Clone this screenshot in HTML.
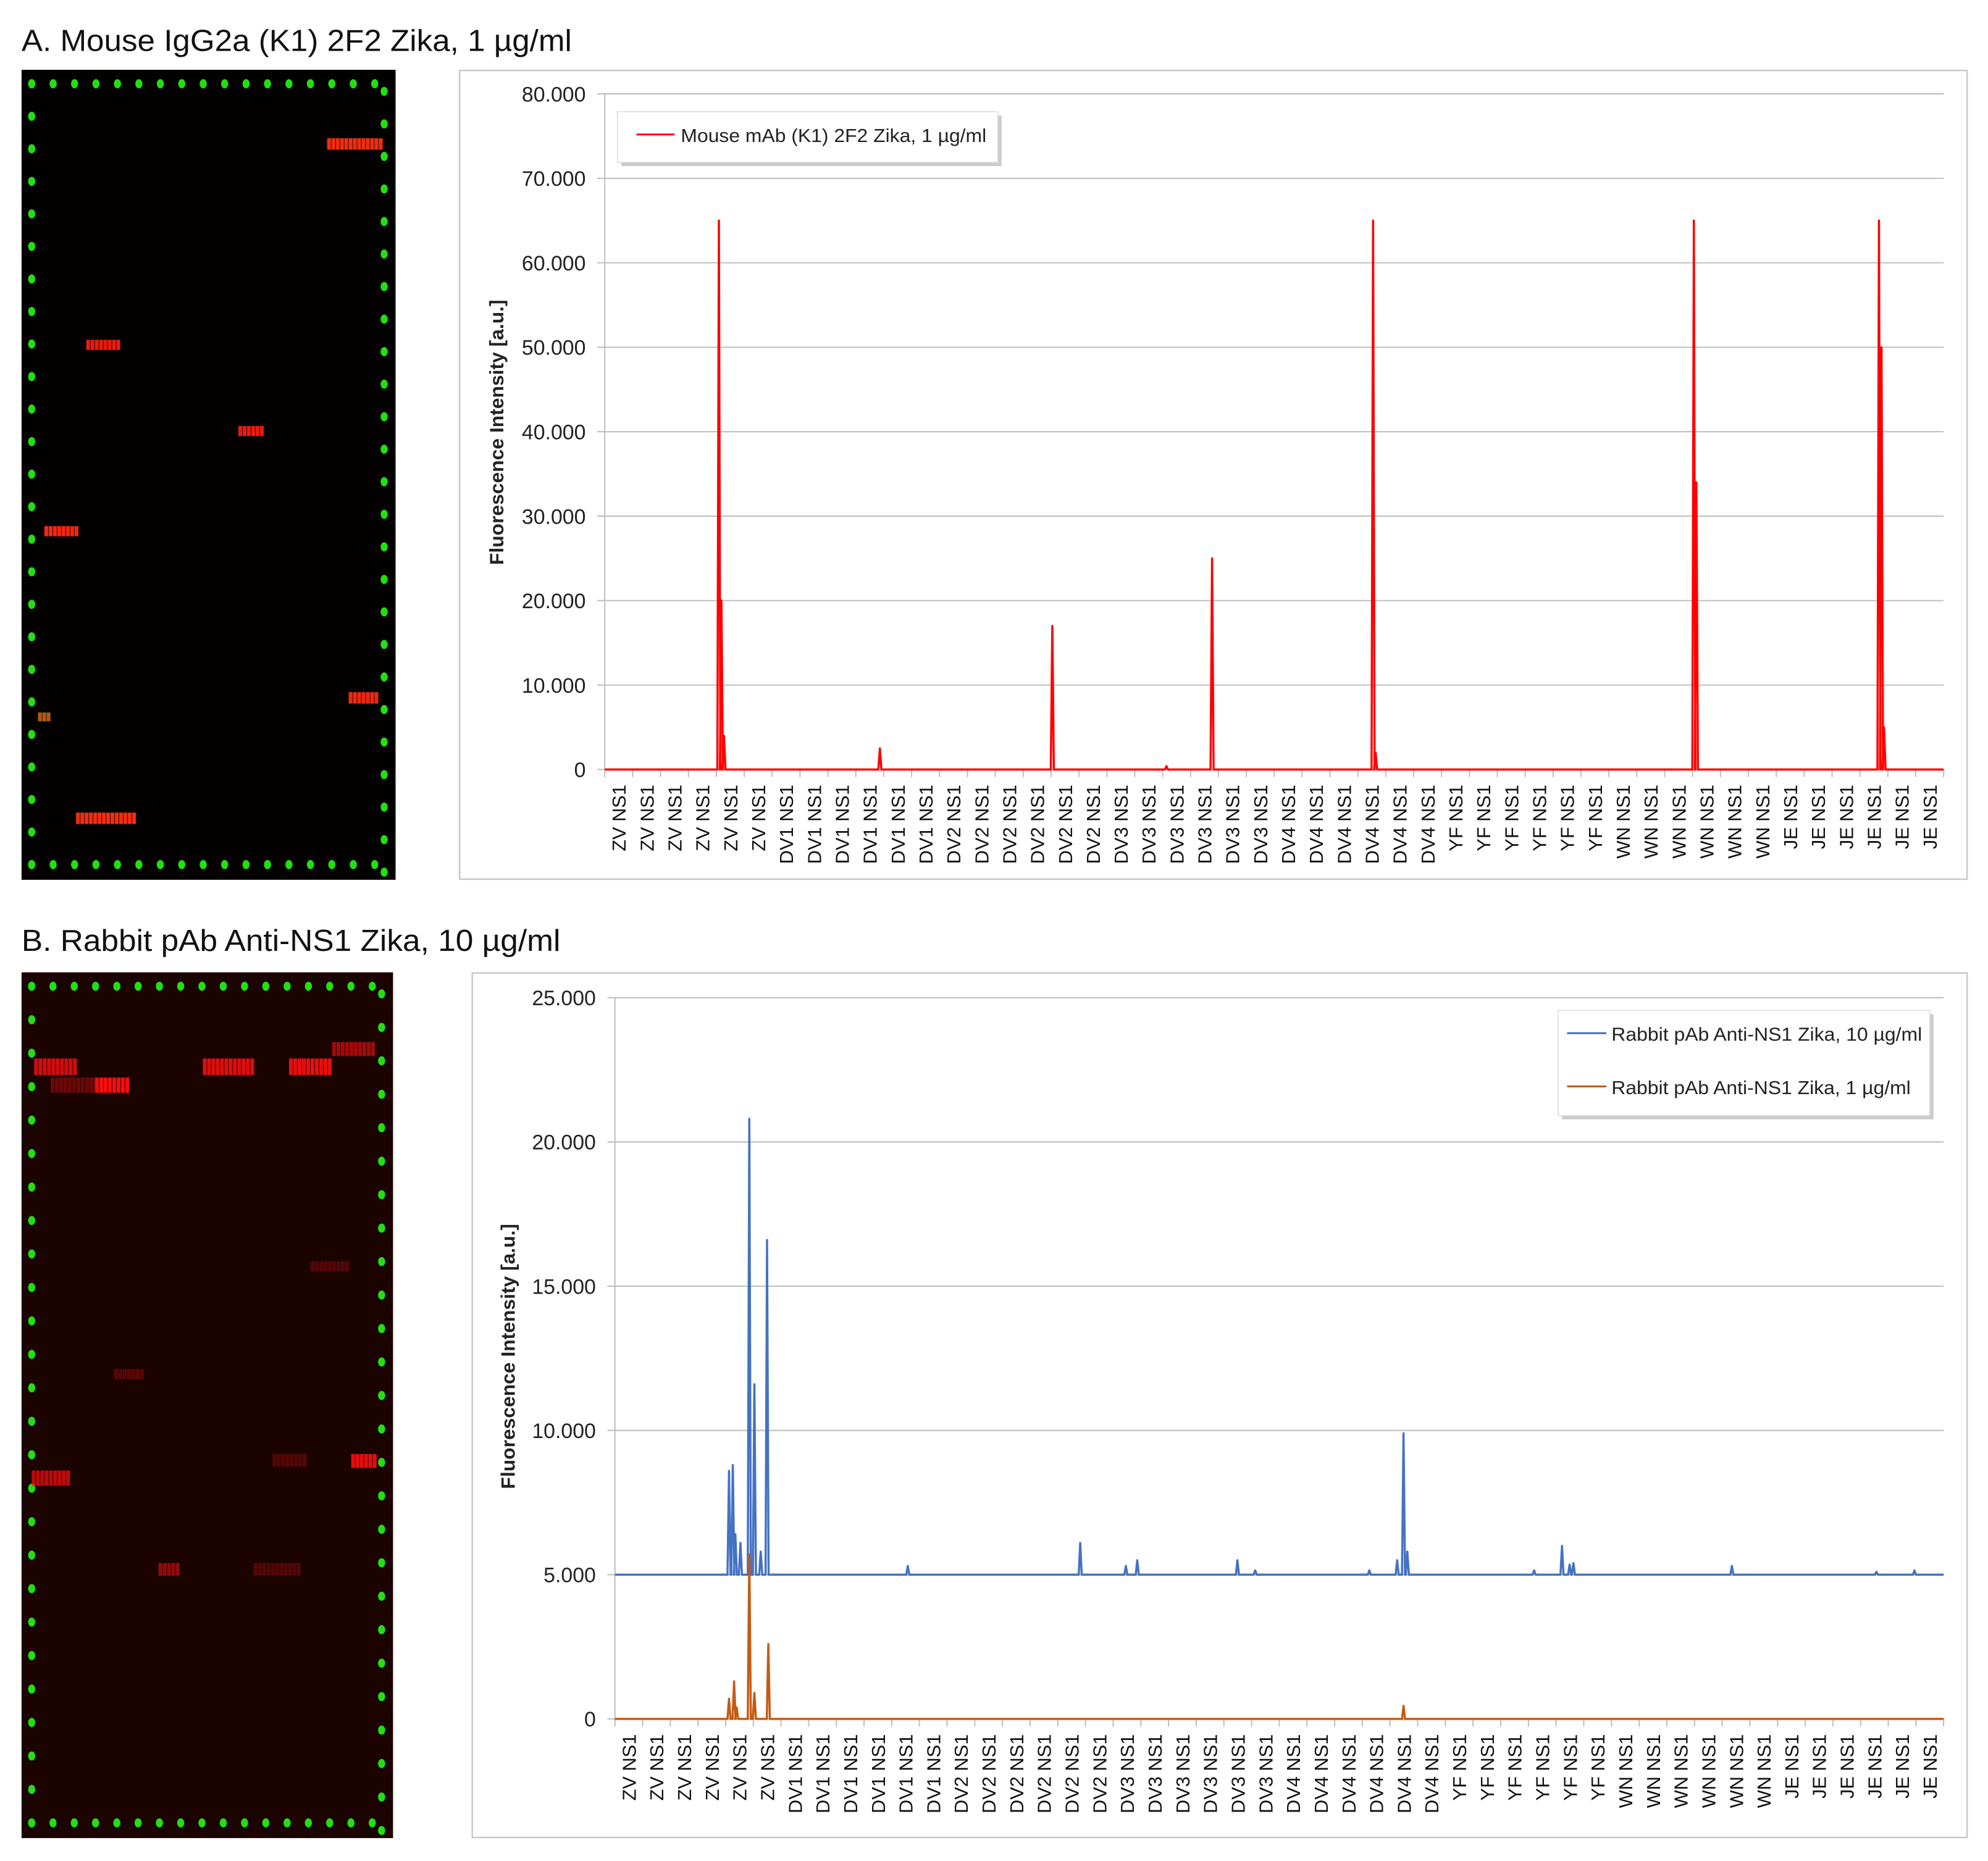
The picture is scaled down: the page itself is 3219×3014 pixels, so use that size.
<!DOCTYPE html>
<html><head><meta charset="utf-8"><style>
html,body{margin:0;padding:0;background:#fff;width:3219px;height:3014px;overflow:hidden}
svg{display:block}
text{font-family:"Liberation Sans",sans-serif}
</style></head><body>
<svg id="s" width="3219" height="3014" viewBox="0 0 1568 1468" xmlns="http://www.w3.org/2000/svg">
<rect width="1568" height="1468" fill="#fff"/>
<text x="17" y="40" font-size="24" fill="#111" textLength="434" lengthAdjust="spacingAndGlyphs">A. Mouse IgG2a (K1) 2F2 Zika, 1 µg/ml</text>
<text x="17" y="750" font-size="24" fill="#111" textLength="425" lengthAdjust="spacingAndGlyphs">B. Rabbit pAb Anti-NS1 Zika, 10 µg/ml</text>
<rect x="17" y="55" width="295" height="639" fill="#030100"/>
<rect x="17" y="767" width="293" height="683" fill="#1b0300"/>
<g id="spots"></g>
<rect x="362.5" y="55.5" width="1189" height="638" fill="#fff" stroke="#c8c8c8" stroke-width="1.2"/>
<rect x="372.5" y="767.5" width="1179" height="682" fill="#fff" stroke="#c8c8c8" stroke-width="1.2"/>
<g id="chartA"></g>
<g id="chartB"></g>
<rect x="490" y="91" width="300" height="40" fill="#999" opacity="0.5"/>
<rect x="487" y="88" width="300" height="40" fill="#fff" stroke="#ddd" stroke-width="0.8"/>
<line x1="502" y1="106" x2="532" y2="106" stroke="#f00" stroke-width="1.5"/>
<text x="537" y="112" font-size="15" fill="#222" textLength="241" lengthAdjust="spacingAndGlyphs">Mouse mAb (K1) 2F2 Zika, 1 µg/ml</text>
<rect x="1232" y="800" width="293" height="83" fill="#999" opacity="0.5"/>
<rect x="1229" y="797" width="293" height="83" fill="#fff" stroke="#ddd" stroke-width="0.8"/>
<line x1="1236" y1="815" x2="1267" y2="815" stroke="#4472c4" stroke-width="1.5"/>
<text x="1271" y="821" font-size="15" fill="#222" textLength="245" lengthAdjust="spacingAndGlyphs">Rabbit pAb Anti-NS1 Zika, 10 µg/ml</text>
<line x1="1236" y1="857" x2="1267" y2="857" stroke="#c55a11" stroke-width="1.5"/>
<text x="1271" y="863" font-size="15" fill="#222" textLength="236" lengthAdjust="spacingAndGlyphs">Rabbit pAb Anti-NS1 Zika, 1 µg/ml</text>
</svg>
<script>
var NS="http://www.w3.org/2000/svg";
function el(p,t,a,txt){var e=document.createElementNS(NS,t);for(var k in a)e.setAttribute(k,a[k]);if(txt!=null)e.textContent=txt;p.appendChild(e);return e;}
var sp=document.getElementById('spots');
function dots(x0,x1,y0,y1){
 for(var i=0;i<17;i++){el(sp,'ellipse',{cx:x0+8+i*(x1-x0-16)/16.5,cy:y0+11,rx:2.8,ry:3.6,fill:'#22e010'});}
 for(var i=0;i<17;i++){el(sp,'ellipse',{cx:x0+8+i*(x1-x0-16)/16.5,cy:y1-12,rx:2.8,ry:3.6,fill:'#22e010'});}
 var n=Math.round((y1-y0-24)/26);
 for(var j=0;j<=n;j++){var yy=y0+11+j*(y1-y0-23)/n;
  el(sp,'ellipse',{cx:x0+8,cy:yy,rx:2.8,ry:3.6,fill:'#22e010'});
  el(sp,'ellipse',{cx:x1-9,cy:yy+6,rx:2.8,ry:3.6,fill:'#22e010'});}
}
dots(17,312,55,694);dots(17,310,767,1450);
function blk(x,y,w,h,c,o){
 for(var xx=x;xx<x+w;xx+=3.4){el(sp,'rect',{x:xx,y:y,width:3,height:h/2,fill:c,opacity:o});el(sp,'rect',{x:xx,y:y+h/2,width:3,height:h/2,fill:c,opacity:o});}
}
blk(258,109,42,9,'#ff3010',0.95);blk(68,268,27,8,'#ff2010',0.9);blk(188,336,20,8,'#ff2010',0.9);
blk(35,415,27,8,'#ff2a10',0.95);blk(275,546,21,9,'#ff2a10',0.95);blk(30,562,10,7,'#ff8020',0.7);blk(60,641,47,9,'#ff3010',0.95);
blk(27,835,33,13,'#ff1010',0.8);blk(75,850,27,12,'#ff1010',0.95);blk(40,850,35,12,'#d01010',0.45);
blk(160,835,40,13,'#ff1010',0.85);blk(228,835,34,13,'#ff1010',0.9);blk(262,822,33,11,'#ff1010',0.6);
blk(277,1147,20,11,'#ff1010',0.9);blk(25,1160,30,12,'#ff1010',0.7);blk(125,1233,15,10,'#e01010',0.6);
blk(200,1233,35,10,'#c01010',0.35);blk(245,995,30,8,'#c01010',0.35);blk(90,1080,22,8,'#c01010',0.4);blk(215,1147,25,10,'#c01010',0.35);
var cats=[];['ZV','DV1','DV2','DV3','DV4','YF','WN','JE'].forEach(function(c){for(var i=0;i<6;i++)cats.push(c+' NS1');});
function chart(g,ax,ar,ytop,y0,max,step,fmt,series,lblx,ylab){
 var G=document.getElementById(g);
 var n=max/step;
 for(var i=0;i<=n;i++){var y=y0-(y0-ytop)*i/n;
  el(G,'line',{x1:ax-6,y1:y,x2:ar,y2:y,stroke:'#bfbfbf','stroke-width':1});
  el(G,'text',{x:lblx,y:y+6,'font-size':16.5,'text-anchor':'end',fill:'#222'},fmt(i*step));}
 el(G,'line',{x1:ax,y1:ytop,x2:ax,y2:y0,stroke:'#bfbfbf','stroke-width':1});
 var w=(ar-ax)/48;
 for(var i=0;i<=48;i++)el(G,'line',{x1:ax+i*w,y1:y0,x2:ax+i*w,y2:y0+6,stroke:'#bfbfbf','stroke-width':1});
 for(var i=0;i<48;i++){var cx=ax+i*w+w/2+5.5;
  el(G,'text',{x:cx,y:y0+12,'font-size':15,'text-anchor':'end',fill:'#111',transform:'rotate(-90 '+cx+' '+(y0+12)+')'},cats[i]);}
 el(G,'text',{x:0,y:0,'font-size':15.5,'font-weight':'bold','text-anchor':'middle',fill:'#222',transform:'translate('+ylab[0]+' '+ylab[1]+') rotate(-90)'},'Fluorescence Intensity [a.u.]');
 series.forEach(function(s){
  var d='M'+ax+' '+s.base;var pk=s.peaks.slice().sort(function(a,b){return a[0]-b[0]});
  pk.forEach(function(p){d+=' L'+(p[0]-1.2)+' '+s.base+' L'+p[0]+' '+p[1]+' L'+(p[0]+1.2)+' '+s.base;});
  d+=' L'+ar+' '+s.base;
  el(G,'path',{d:d,fill:'none',stroke:s.c,'stroke-width':1.7,'stroke-linejoin':'round'});
 });
}
var fA=function(v){return v==0?'0':(v/1000)+'.000'};
var yA=function(v){return 607-v*533/80000};
chart('chartA',477,1533,74,607,80000,10000,fA,[{c:'#f00',base:607,peaks:[[567,yA(65000)],[569,yA(20000)],[571,yA(4000)],[694,yA(2500)],[830,yA(17000)],[956,yA(25000)],[1083,yA(65000)],[1085,yA(2000)],[1336,yA(65000)],[1338,yA(34000)],[1482,yA(65000)],[1484,yA(50000)],[1486,yA(5000)],[920,yA(400)]]}],462,[397,341]);
var yB=function(v){return 1356-v*569/25000};
chart('chartB',485,1533,787,1356,25000,5000,fA,[
 {c:'#4472c4',base:yB(5000),peaks:[[575,yB(8600)],[578,yB(8800)],[580,yB(6400)],[584,yB(6100)],[591,yB(20800)],[595,yB(11600)],[600,yB(5800)],[605,yB(16600)],[716,yB(5300)],[852,yB(6100)],[888,yB(5300)],[897,yB(5500)],[976,yB(5500)],[990,yB(5150)],[1080,yB(5150)],[1102,yB(5500)],[1107,yB(9900)],[1110,yB(5800)],[1210,yB(5150)],[1232,yB(6000)],[1238,yB(5350)],[1241,yB(5400)],[1366,yB(5300)],[1480,yB(5100)],[1510,yB(5150)]]},
 {c:'#c55a11',base:1356,peaks:[[575,yB(700)],[579,yB(1300)],[581,yB(400)],[591,yB(5700)],[595,yB(900)],[606,yB(2600)],[1107,yB(450)]]}],470,[406,1070]);
</script>
</body></html>
